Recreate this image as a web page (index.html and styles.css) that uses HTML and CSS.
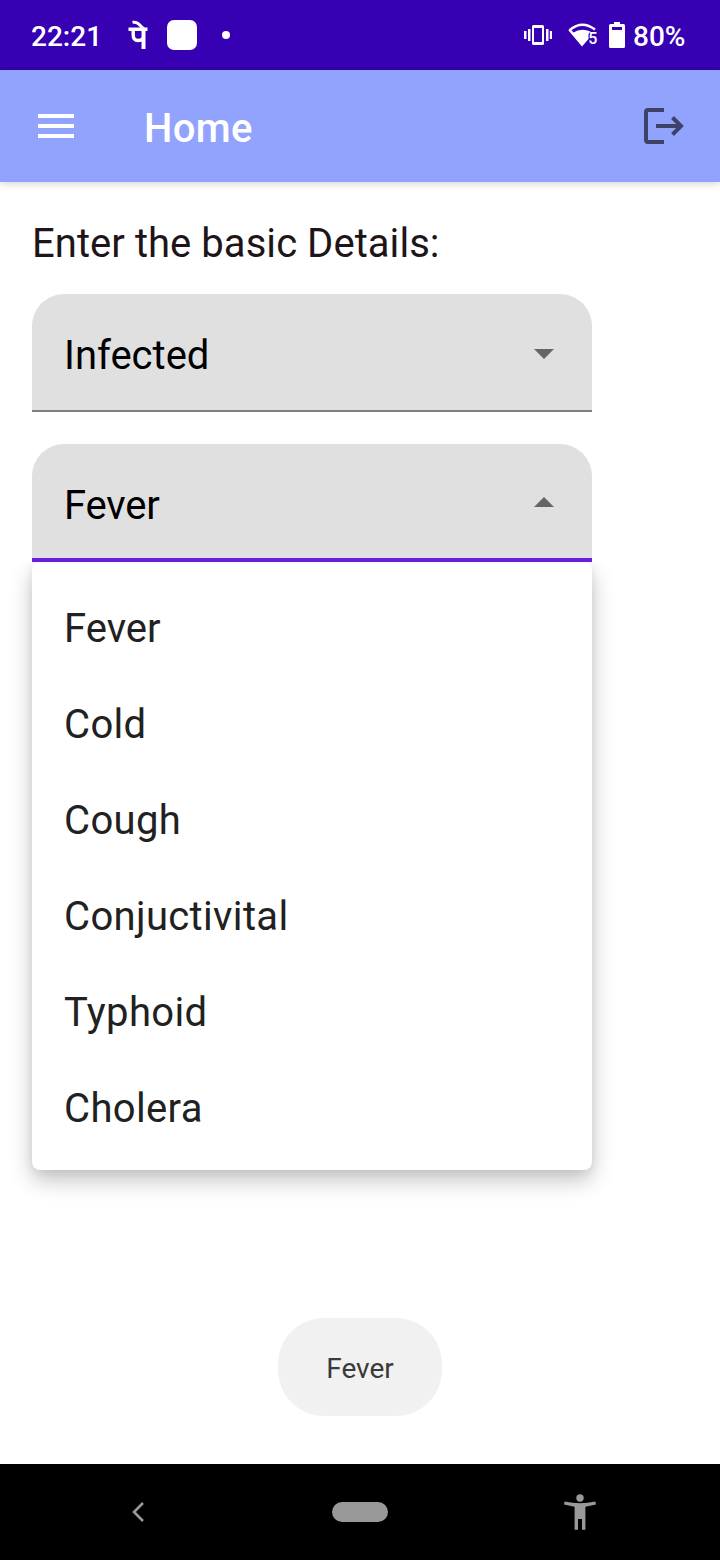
FILE: index.html
```html
<!DOCTYPE html>
<html lang="en">
<head>
<meta charset="utf-8">
<title>Home</title>
<link rel="stylesheet" href="styles.css">
</head>
<body>
<div class="screen">
  <div class="status">
    <span class="clock">22:21</span>
    <svg class="pe" width="22" height="30" viewBox="128 20 22 30" fill="none" stroke="#fff" stroke-width="3.4"><path d="M128.500 29.200H147.500M133.200 29V35Q133.200 40.500 138 40.500Q141 40.500 143 38.500"/><path stroke-width="4" d="M143.500 28V49"/><path stroke-width="3" d="M132.500 22.300Q136 21.600 138.500 23.800L144.500 29.500"/></svg>
    <span class="app-square"></span>
    <span class="dot"></span>
    <div class="status-right">
      <svg width="30" height="22" viewBox="523 24 30 22" fill="#fff"><path d="M524 31h2.500v8H524zM528 29h2.500v12H528zM546 29h2.500v12H546zM549.800 31h2.200v8h-2.200z"/><path fill-rule="evenodd" d="M533.500 25h9q1.500 0 1.500 1.500v17q0 1.500-1.500 1.500h-9q-1.500 0-1.500-1.500v-17q0-1.500 1.500-1.500zM534 28v14h8V28z"/></svg>
      <svg class="wifi" width="30" height="26" viewBox="568 22 30 26"><path d="M569.500 30.200Q582 19.500 595 29.500" fill="none" stroke="#fff" stroke-width="2.400"/><path d="M568.300 30.300L570.300 28.800L573.500 32.500Q581 27.500 590.500 31.500L588.500 34V39L582 46.500Z" fill="#fff"/><text class="wifi-num" x="588.200" y="44.300">5</text></svg>
      <svg class="battery" width="16" height="26" viewBox="609 22 16 26" fill="#fff"><path fill-rule="evenodd" d="M614 22h6v2h3.500q1.500 0 1.500 1.500v21q0 1.500-1.500 1.500h-13q-1.500 0-1.500-1.500v-21q0-1.500 1.500-1.500H614zM612 27v3h10v-3z"/></svg>
      <span class="percent">80%</span>
    </div>
  </div>
  <header class="appbar">
    <svg width="36" height="24" viewBox="0 0 36 24" fill="#fff"><path d="M0 0h36v4H0zM0 10h36v4H0zM0 20h36v4H0z"/></svg>
    <h1 class="title">Home</h1>
    <svg class="logout" width="42" height="36" viewBox="0 0 42 36" fill="none" stroke="#3d4269" stroke-width="4"><path d="M20 2H4Q2 2 2 4V32Q2 34 4 34H20M12 18H37M28.500 9.500L37 18L28.500 26.500"/></svg>
  </header>
  <main class="content">
    <p class="prompt">Enter the basic Details:</p>
    <div class="field"><span class="value">Infected</span><svg width="20" height="10"><path d="M0 0H20L10 10Z" fill="#666"/></svg></div>
    <div class="field field-open"><span class="value">Fever</span><svg width="20" height="10"><path d="M0 10H20L10 0Z" fill="#666"/></svg></div>
    <ul class="menu"><li class="tight">Fever</li><li>Cold</li><li>Cough</li><li>Conjuctivital</li><li>Typhoid</li><li>Cholera</li></ul>
    <div class="toast">Fever</div>
  </main>
  <nav class="navbar">
    <svg class="back" width="12" height="20" viewBox="0 0 12 20" fill="none" stroke="#999" stroke-width="2.600"><path d="M11 1L2 10L11 19"/></svg>
    <span class="home-pill"></span>
    <svg class="person" width="32" height="36" viewBox="564 1494 32 36" fill="#999"><circle cx="580" cy="1498" r="3.700"/><path d="M564.600 1501.400Q580 1505 595.400 1501.400L596 1504.400L585.400 1506.700V1529.800H582V1519H578V1529.800H574.600V1506.700L564 1504.400Z"/></svg>
  </nav>
</div>
</body>
</html>
```

FILE: styles.css
```css
* { box-sizing: border-box; }
body { margin: 0; background: #fff; font-family: Roboto, sans-serif; }
svg { display: block; flex: none; }
.screen { width: 720px; height: 1560px; display: flex; flex-direction: column; overflow: hidden; }
.status { height: 70px; flex: none; background: #3700b3; color: #fff; display: flex; align-items: center; padding: 0 35px 0 31px; font-size: 28px; font-weight: 500; }
.clock { width: 97px; padding-top: 3px; }
.app-square { width: 30px; height: 30px; border-radius: 7px; background: #fff; margin-left: 17px; }
.dot { width: 8px; height: 8px; border-radius: 50%; background: #fff; margin-left: 25px; }
.status-right { margin-left: auto; display: flex; align-items: center; }
.wifi { margin-left: 15px; }
.wifi-num { font: 500 16px Roboto, sans-serif; fill: #fff; }
.battery { margin-left: 11px; }
.percent { margin-left: 8px; padding-top: 3px; width: 52px; white-space: nowrap; }
.appbar { position: relative; height: 112px; flex: none; background: #92a3fd; display: flex; align-items: center; padding: 0 34px 0 38px; box-shadow: 0 1px 8px rgba(0,0,0,.2); }
.title { margin: 0 0 0 70px; padding-top: 4px; color: #fff; font-size: 40px; font-weight: 500; letter-spacing: .4px; }
.logout { margin-left: auto; }
.content { flex: 1; padding: 38px 32px 0; display: flex; flex-direction: column; }
.prompt { margin: 0; height: 74px; line-height: 48px; font-size: 40px; letter-spacing: .05px; color: #1d1517; white-space: nowrap; }
.field { width: 560px; height: 118px; flex: none; border-radius: 32px 32px 0 0; background: #e0e0e0; border-bottom: 2px solid #808080; display: flex; align-items: center; justify-content: space-between; padding: 4px 38px 0 32px; font-size: 40px; color: #000; }
.value { padding-top: 3px; }
.field-open { margin-top: 32px; padding-top: 2px; letter-spacing: -.2px; border-bottom: 4px solid #6a1be0; }
.field-open .value { padding-top: 6px; }
.menu { position: relative; width: 560px; height: 608px; flex: none; margin: 0; padding: 16px 0; list-style: none; background: #fff; border-radius: 8px; box-shadow: 0 10px 22px rgba(0,0,0,.24), 0 2px 8px rgba(0,0,0,.06); clip-path: inset(0 -40px -50px); font-size: 40px; letter-spacing: .35px; color: #212121; }
.menu li { height: 96px; line-height: 102px; padding-left: 32px; }
.menu .tight { letter-spacing: 0; }
.toast { width: 164px; height: 98px; margin: 148px auto 0; border-radius: 46px; background: #f1f1f1; color: #3a3a3a; font-size: 28px; line-height: 101px; text-align: center; }
.navbar { height: 96px; flex: none; background: #000; display: flex; align-items: center; padding: 0 124px 0 132px; }
.home-pill { width: 56px; height: 20px; border-radius: 10px; background: #999; margin-left: 188px; }
.person { margin-left: auto; }
```
